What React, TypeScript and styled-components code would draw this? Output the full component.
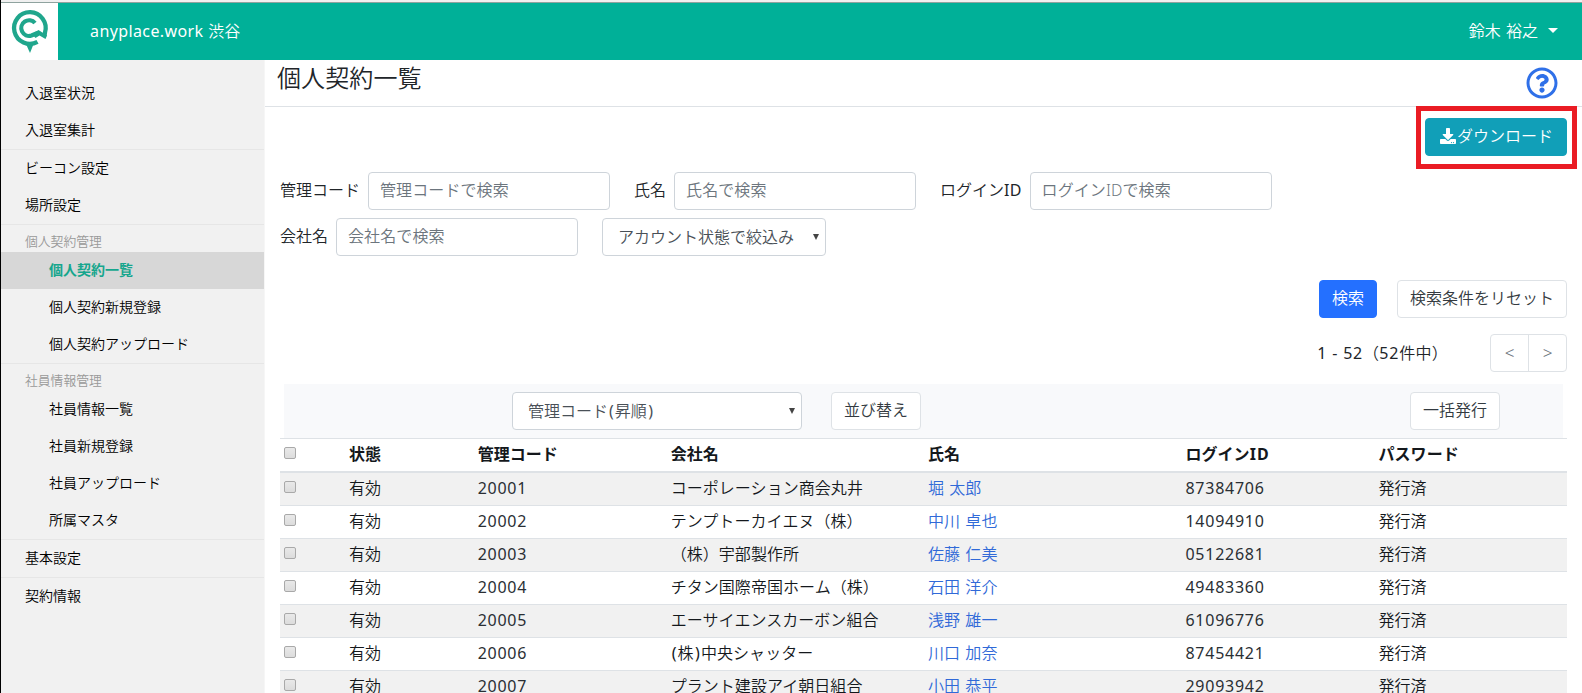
import React from 'react';
import styled, { createGlobalStyle, css } from 'styled-components';
import { FaDownload, FaRegQuestionCircle } from 'react-icons/fa';

const GlobalStyle = createGlobalStyle`
  *, *::before, *::after { box-sizing: border-box; }
  body {
    margin: 0;
    overflow: hidden;
    background: #fff;
    color: #212529;
    font-family: "Noto Sans", "Noto Sans CJK JP", sans-serif;
    font-size: 16px;
    font-weight: 350;
    line-height: 24px;
  }
  input, button, select { font: inherit; }
`;

const Page = styled.div`
  display: flex;
  flex-direction: column;
  height: 693px;
  overflow: hidden;
  border-left: 1px solid #000;
`;

const WindowEdge = styled.div`
  flex: none;
  height: 3px;
  background: #f0f0f0;
  border-bottom: 1px solid #8fa39f;
`;

const Header = styled.header`
  flex: none;
  display: flex;
  align-items: center;
  height: 57px;
  background: #00b098;
  color: #fff;
`;

const LogoBox = styled.div`
  width: 57px;
  height: 57px;
  background: #fff;
`;

const Brand = styled.div`
  margin-left: 32px;
  padding-bottom: 2px;
`;

const Latin = styled.span<{ $spacing?: number }>`
  letter-spacing: ${p => p.$spacing ?? 1.2}px;
`;

const RegularLatin = styled(Latin)`
  font-weight: 400;
`;

const Paren = styled.span<{ $open?: boolean }>`
  font-weight: 400;
  padding: ${p => (p.$open ? '0 1px' : '0 1px 0 1.5px')};
`;

const UserMenu = styled.div`
  display: flex;
  align-items: center;
  gap: 10px;
  margin-left: auto;
  padding: 0 24px 2px 0;
  word-spacing: 1.2px;
`;

const Caret = styled.span`
  border-top: 5px solid #fff;
  border-left: 5px solid transparent;
  border-right: 5px solid transparent;
`;

const Body = styled.div`
  flex: 1;
  display: flex;
  min-height: 0;
`;

const Sidebar = styled.nav`
  flex: none;
  width: 264px;
  padding-top: 15px;
  background: #f1f1f1;
  border-right: 1px solid #f6f6f6;
  font-size: 14px;
`;

const NavGroup = styled.div`
  & + & { border-top: 1px solid #e6e6e6; }
`;

const NavHeading = styled.div`
  height: 27px;
  padding: 4px 0 0 24px;
  color: #999;
  font-size: 12.8px;
`;

const NavItem = styled.a<{ $nested?: boolean; $active?: boolean }>`
  display: flex;
  align-items: center;
  height: 37px;
  padding: 0 0 2px ${p => (p.$nested ? 48 : 24)}px;
  color: #000;
  ${p => p.$active && css`
    background: #d7d7d7;
    color: #16a68d;
    font-weight: 700;
  `}
`;

const Main = styled.main`
  flex: 1;
  min-width: 0;
  overflow: hidden;
`;

const TitleBar = styled.div`
  display: flex;
  justify-content: space-between;
  height: 47px;
  padding: 0 24px 0 12px;
  border-bottom: 1px solid #dee2e6;
`;

const Title = styled.h1`
  margin: 4px 0 0;
  font-size: 24px;
  font-weight: 350;
  line-height: 28px;
  letter-spacing: 0.1px;
`;

const HelpIcon = styled(FaRegQuestionCircle)`
  margin-top: 7px;
  font-size: 32px;
  color: #2f70e8;
`;

const Content = styled.div`
  padding: 11px 15px 0;
`;

const ActionRow = styled.div<{ $gap?: number; $top?: number }>`
  display: flex;
  justify-content: flex-end;
  align-items: center;
  gap: ${p => p.$gap ?? 0}px;
  margin-top: ${p => p.$top ?? 0}px;
`;

const variants = {
  light: css`background: #fff; border-color: #dee2e6; color: #333a40;`,
  primary: css`background: #2470ff; border-color: #2470ff; color: #fff;`,
  info: css`background: #119fb8; border-color: #119fb8; color: #fff; padding-left: 14px;`,
};

const Button = styled.button<{ $variant?: keyof typeof variants }>`
  display: inline-flex;
  align-items: center;
  gap: 1px;
  height: 38px;
  padding: 0 12px 2px;
  border: 1px solid;
  border-radius: 4px;
  white-space: nowrap;
  ${p => variants[p.$variant ?? 'light']}
`;

const DownloadButton = styled(Button)`
  width: 142px;
`;

const Highlight = styled.div`
  position: relative;
  &::after {
    content: "";
    position: absolute;
    inset: -12px -10px -13px -9px;
    border: 5px solid #ea1c24;
  }
`;

const SearchForm = styled.form`
  display: flex;
  flex-wrap: wrap;
  gap: 8px 24px;
  margin-top: 16px;
`;

const Field = styled.label`
  display: flex;
  align-items: center;
  gap: 8px;
`;

const FieldLabel = styled.span`
  padding-bottom: 2px;
`;

const TextInput = styled.input`
  width: 242px;
  height: 38px;
  padding: 0 12px 2px 11px;
  border: 1px solid #ced4da;
  border-radius: 4px;
  outline: none;
  &::placeholder { color: #6c757d; opacity: 1; letter-spacing: 0.1px; }
`;

const SelectBox = styled.div<{ $width: number }>`
  display: flex;
  align-items: center;
  justify-content: space-between;
  width: ${p => p.$width}px;
  height: 38px;
  padding: 0 6px 0 15px;
  border: 1px solid #ced4da;
  border-radius: 4px;
  background: #fff;
  color: #495057;
  &::after {
    content: "";
    border-top: 6px solid #444;
    border-left: 3px solid transparent;
    border-right: 3px solid transparent;
  }
`;

const Range = styled.div`
  letter-spacing: 0.25px;
`;

const Pager = styled.div`
  display: flex;
  width: 77px;
  height: 38px;
  border: 1px solid #dee2e6;
  border-radius: 4px;
`;

const PageButton = styled.a`
  flex: 1;
  display: flex;
  align-items: center;
  justify-content: center;
  color: #6c757d;
  font-size: 17px;
  & + & { border-left: 1px solid #dee2e6; }
`;

const SortBar = styled.div`
  display: flex;
  align-items: center;
  height: 54px;
  margin: 12px 4px 0;
  padding: 0 63px 0 228px;
  background: #f8f9fb;
`;

const SortButton = styled(Button)`
  margin-left: 29px;
`;

const IssueButton = styled(Button)`
  margin-left: auto;
`;

const Row = styled.div<{ $striped?: boolean; $head?: boolean }>`
  display: grid;
  grid-template-columns: 5% 10% 15% 20% 20% 15% 15%;
  align-items: center;
  height: 33px;
  padding-bottom: 2px;
  border-bottom: 1px solid #dee2e6;
  color: #14181c;
  background: ${p => (p.$striped ? '#f1f1f1' : '#fff')};
  ${p => p.$head && css`
    height: 35px;
    border-top: 1px solid #dee2e6;
    border-bottom-width: 2px;
    font-weight: 700;
  `}
`;

const Cell = styled.div<{ $digits?: boolean }>`
  padding-left: 4.6px;
  white-space: nowrap;
  letter-spacing: 0.05px;
  word-spacing: 1px;
  ${p => p.$digits && css`
    color: #2a2f34;
    font-weight: 400;
    letter-spacing: 0.75px;
  `}
`;

const CheckCell = styled.div`
  padding: 0 0 2px 4px;
  line-height: 0;
`;

const Checkbox = styled.input`
  appearance: none;
  width: 12px;
  height: 12px;
  margin: 0;
  border: 1px solid #a9a9a9;
  border-radius: 2px;
  background: linear-gradient(#e9e9e9, #dcdcdc);
`;

const NameLink = styled.a`
  color: #3069d8;
`;

const navigation: { heading?: string; items: string[] }[] = [
  { items: ['入退室状況', '入退室集計'] },
  { items: ['ビーコン設定', '場所設定'] },
  { heading: '個人契約管理', items: ['個人契約一覧', '個人契約新規登録', '個人契約アップロード'] },
  { heading: '社員情報管理', items: ['社員情報一覧', '社員新規登録', '社員アップロード', '所属マスタ'] },
  { items: ['基本設定'] },
  { items: ['契約情報'] },
];

const fields: { label: React.ReactNode; placeholder: string }[] = [
  { label: '管理コード', placeholder: '管理コードで検索' },
  { label: '氏名', placeholder: '氏名で検索' },
  { label: <>ログイン<RegularLatin $spacing={0.2}>ID</RegularLatin></>, placeholder: 'ログインIDで検索' },
  { label: '会社名', placeholder: '会社名で検索' },
];

const columns: React.ReactNode[] = ['状態', '管理コード', '会社名', '氏名', <>ログイン<Latin>ID</Latin></>, 'パスワード'];

const contracts: [string, React.ReactNode, string, string][] = [
  ['20001', 'コーポレーション商会丸井', '堀 太郎', '87384706'],
  ['20002', 'テンプトーカイエヌ（株）', '中川 卓也', '14094910'],
  ['20003', '（株）宇部製作所', '佐藤 仁美', '05122681'],
  ['20004', 'チタン国際帝国ホーム（株）', '石田 洋介', '49483360'],
  ['20005', 'エーサイエンスカーボン組合', '浅野 雄一', '61096776'],
  ['20006', <><Paren $open>(</Paren>株<Paren>)</Paren>中央シャッター</>, '川口 加奈', '87454421'],
  ['20007', 'プラント建設アイ朝日組合', '小田 恭平', '29093942'],
];

function Logo() {
  return (
    <svg width="57" height="57" viewBox="0 0 57 57" fill="none" stroke="#1fa68c">
      <path d="M36.5 38.8A15.8 15.8 0 1 1 44 29.5L43.5 33" strokeWidth="4.3" />
      <path d="M34 20A7.8 7.8 0 1 0 30.5 32.5L36.5 30" strokeWidth="4.2" />
      <path d="M31 31L37.5 27L46 32.5L44.5 36L38.5 32.5L34.5 35Z" fill="#1fa68c" stroke="none" />
      <path d="M24.5 40H33L29 50Z" fill="#1fa68c" stroke="none" />
    </svg>
  );
}

export default function App() {
  return (
    <>
      <GlobalStyle />
      <Page>
        <WindowEdge />
        <Header>
          <LogoBox><Logo /></LogoBox>
          <Brand><RegularLatin $spacing={0.4}>anyplace.work </RegularLatin>渋谷</Brand>
          <UserMenu>鈴木 裕之<Caret /></UserMenu>
        </Header>
        <Body>
          <Sidebar>
            {navigation.map(group => (
              <NavGroup key={group.items[0]}>
                {group.heading && <NavHeading>{group.heading}</NavHeading>}
                {group.items.map(item => (
                  <NavItem key={item} $nested={!!group.heading} $active={item === '個人契約一覧'}>{item}</NavItem>
                ))}
              </NavGroup>
            ))}
          </Sidebar>
          <Main>
            <TitleBar>
              <Title>個人契約一覧</Title>
              <HelpIcon />
            </TitleBar>
            <Content>
              <ActionRow>
                <Highlight>
                  <DownloadButton $variant="info"><FaDownload />ダウンロード</DownloadButton>
                </Highlight>
              </ActionRow>
              <SearchForm>
                {fields.map(({ label, placeholder }) => (
                  <Field key={placeholder}>
                    <FieldLabel>{label}</FieldLabel>
                    <TextInput placeholder={placeholder} />
                  </Field>
                ))}
                <SelectBox $width={224}>アカウント状態で絞込み</SelectBox>
              </SearchForm>
              <ActionRow $top={24} $gap={20}>
                <Button type="button" $variant="primary">検索</Button>
                <Button type="button">検索条件をリセット</Button>
              </ActionRow>
              <ActionRow $top={16} $gap={42}>
                <Range><RegularLatin $spacing={0.8}>1 - 52</RegularLatin>（<RegularLatin $spacing={0.8}>52</RegularLatin>件中）</Range>
                <Pager>
                  <PageButton>&lt;</PageButton>
                  <PageButton>&gt;</PageButton>
                </Pager>
              </ActionRow>
              <SortBar>
                <SelectBox $width={290}>
                  <span>管理コード<Paren $open>(</Paren>昇順<Paren>)</Paren></span>
                </SelectBox>
                <SortButton>並び替え</SortButton>
                <IssueButton>一括発行</IssueButton>
              </SortBar>
              <Row $head>
                <CheckCell><Checkbox type="checkbox" /></CheckCell>
                {columns.map((column, i) => <Cell key={i}>{column}</Cell>)}
              </Row>
              {contracts.map(([code, company, name, login], i) => (
                <Row key={code} $striped={i % 2 === 0}>
                  <CheckCell><Checkbox type="checkbox" /></CheckCell>
                  <Cell>有効</Cell>
                  <Cell $digits>{code}</Cell>
                  <Cell>{company}</Cell>
                  <Cell><NameLink>{name}</NameLink></Cell>
                  <Cell $digits>{login}</Cell>
                  <Cell>発行済</Cell>
                </Row>
              ))}
            </Content>
          </Main>
        </Body>
      </Page>
    </>
  );
}
